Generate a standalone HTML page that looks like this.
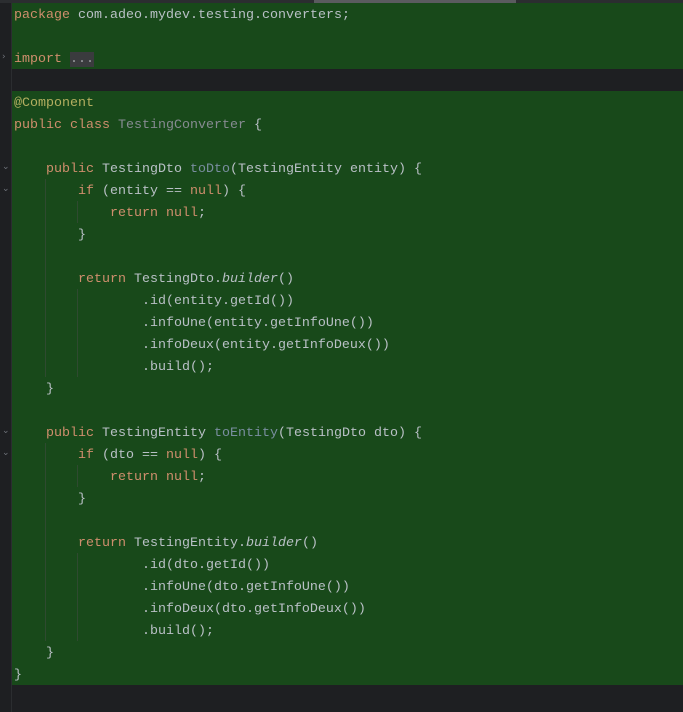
<!DOCTYPE html>
<html><head><meta charset="utf-8"><style>
html,body{margin:0;padding:0;width:683px;height:712px;overflow:hidden;background:#1e1f22;}
.top{position:absolute;left:0;top:0;width:683px;height:3px;background:#2b2d30;}
.thumb{position:absolute;left:314px;top:0;width:202px;height:3px;background:#5a5b5f;}
.gut{position:absolute;left:11px;top:3px;width:1px;height:709px;background:#2b2d30;}
.green{position:absolute;left:12px;top:3px;width:671px;height:682px;background:#18491a;}
.dark{position:absolute;left:12px;top:69px;width:671px;height:22px;background:#1e1f22;}
.code{position:absolute;left:14px;top:5px;margin:0;font-family:"Liberation Mono",monospace;font-size:13.33px;line-height:22px;color:#b9c0c6;white-space:pre;}
.k{color:#cf8e6d}.a{color:#b3ae60}.u{color:#868a91}.m{color:#7a8ea0}.i{font-style:italic}
.ell{background:#3a3b3e;color:#9a9ca0}
.g{position:absolute;width:1px;background:#2f4a30;}
.f{position:absolute;left:2px;color:#6f737a;font-size:9px;font-family:"DejaVu Sans",sans-serif;}
</style></head><body>
<div class="top"></div><div class="thumb"></div>
<div class="gut"></div>
<div class="green"></div><div class="dark"></div>
<div class="g" style="left:45px;top:179px;height:198px"></div>
<div class="g" style="left:77px;top:201px;height:22px"></div>
<div class="g" style="left:77px;top:289px;height:88px"></div>
<div class="g" style="left:45px;top:443px;height:198px"></div>
<div class="g" style="left:77px;top:465px;height:22px"></div>
<div class="g" style="left:77px;top:553px;height:88px"></div>
<div class="f" style="top:52px">›</div>
<div class="f" style="top:162px">⌄</div>
<div class="f" style="top:184px">⌄</div>
<div class="f" style="top:426px">⌄</div>
<div class="f" style="top:448px">⌄</div>
<pre class="code"><span class="k">package</span> com.adeo.mydev.testing.converters;

<span class="k">import</span> <span class="ell">...</span>

<span class="a">@Component</span>
<span class="k">public class</span> <span class="u">TestingConverter</span> {

    <span class="k">public</span> TestingDto <span class="m">toDto</span>(TestingEntity entity) {
        <span class="k">if</span> (entity == <span class="k">null</span>) {
            <span class="k">return null</span>;
        }

        <span class="k">return</span> TestingDto.<span class="i">builder</span>()
                .id(entity.getId())
                .infoUne(entity.getInfoUne())
                .infoDeux(entity.getInfoDeux())
                .build();
    }

    <span class="k">public</span> TestingEntity <span class="m">toEntity</span>(TestingDto dto) {
        <span class="k">if</span> (dto == <span class="k">null</span>) {
            <span class="k">return null</span>;
        }

        <span class="k">return</span> TestingEntity.<span class="i">builder</span>()
                .id(dto.getId())
                .infoUne(dto.getInfoUne())
                .infoDeux(dto.getInfoDeux())
                .build();
    }
}</pre>
</body></html>
